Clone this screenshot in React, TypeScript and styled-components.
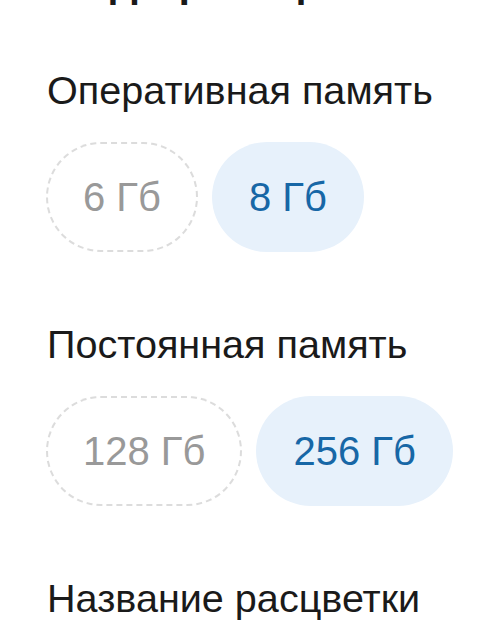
import React, { useState } from 'react';
import styled, { createGlobalStyle } from 'styled-components';

const GlobalStyle = createGlobalStyle`
    body {
        margin: 0;
        background: #ffffff;
        font-family: "Liberation Sans", Arial, sans-serif;
    }
`;

const Page = styled.div`
    padding: 0 46px;
    overflow: hidden;
    height: 624px;
    box-sizing: border-box;
`;

const Heading = styled.h2`
    margin: -45px 0 59px 1px;
    font-size: 44px;
    line-height: 52px;
    font-weight: 700;
    color: #1a1a1a;
    white-space: nowrap;
`;

const Section = styled.section`
    margin-bottom: 68px;
`;

const Label = styled.p`
    margin: 0 0 28px 1px;
    font-size: 39.6px;
    line-height: 48px;
    color: #1a1a1a;
    white-space: nowrap;
`;

const ChipRow = styled.div`
    display: flex;
    gap: 14px;
`;

const Chip = styled.button<{ $active: boolean }>`
    padding: 29px 35px;
    border-radius: 60px;
    border: 2px ${({ $active }) => ($active ? 'solid transparent' : 'dashed #dcdcdc')};
    background: ${({ $active }) => ($active ? '#e7f1fb' : '#ffffff')};
    color: ${({ $active }) => ($active ? '#1767a6' : '#999999')};
    font-family: "Liberation Sans", Arial, sans-serif;
    font-size: 40px;
    line-height: 48px;
    cursor: pointer;
    white-space: nowrap;
`;

interface OptionGroupProps {
    title: string,
    options: string[],
    initial: number,
}

const OptionGroup: React.FC<OptionGroupProps> = ({ title, options, initial }) => {
    const [ selected, setSelected ] = useState(initial);

    return (
        <Section>
            <Label>{title}</Label>
            <ChipRow>
                {options.map((opt, i) => (
                    <Chip key={opt} $active={i === selected} onClick={() => setSelected(i)}>
                        {opt}
                    </Chip>
                ))}
            </ChipRow>
        </Section>
    );
};

const App: React.FC = () => {
    return (
        <Page>
            <GlobalStyle />
            <Heading>Модификация</Heading>
            <OptionGroup title="Оперативная память" options={['6 Гб', '8 Гб']} initial={1} />
            <OptionGroup title="Постоянная память" options={['128 Гб', '256 Гб']} initial={1} />
            <Label>Название расцветки</Label>
        </Page>
    );
};

export default App;
